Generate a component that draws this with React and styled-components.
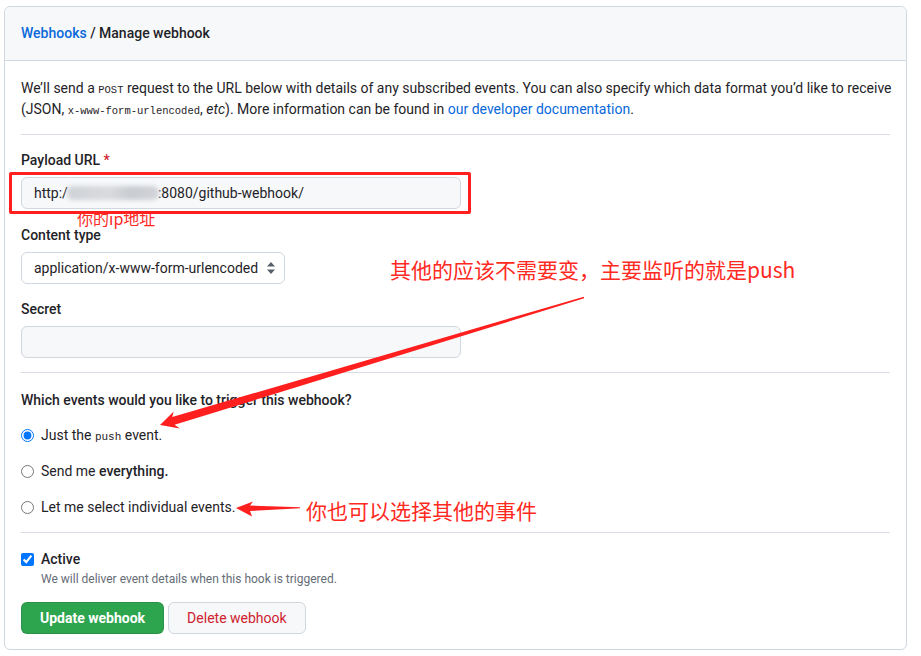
import React from "react";
import styled, { createGlobalStyle } from "styled-components";

const SANS = `Roboto, "Noto Sans", "Noto Sans CJK SC", sans-serif`;
const MONO = `"Liberation Mono", "DejaVu Sans Mono", monospace`;
const CJK = `"Noto Sans CJK SC", "Noto Sans", sans-serif`;

const Global = createGlobalStyle`
  html, body { margin: 0; padding: 0; background: #ffffff; }
  body { font-family: ${SANS}; color: #1f2328; font-size: 14px; line-height: 21px; }
  * { box-sizing: border-box; }
`;

const Page = styled.div`
  position: relative;
  width: 921px;
  height: 656px;
  padding: 6px 14px 0 4px;
  overflow: hidden;
`;

const Box = styled.div`
  border: 1px solid #d0d7de;
  border-radius: 6px;
  background: #fff;
`;

const BoxHeader = styled.div`
  background: #f6f8fa;
  border-bottom: 1px solid #d0d7de;
  border-radius: 6px 6px 0 0;
  padding: 16px;
  font-weight: 500;
  font-size: 14px;
  line-height: 21px;
  color: #1f2328;
`;

const Crumb = styled.a`
  color: #0969da;
  text-decoration: none;
`;

const BoxBody = styled.div`
  padding: 16px 16px 15px 16px;
  display: flex;
  flex-direction: column;
`;

const Intro = styled.p`
  margin: 0;
  padding-top: 1px;
  font-size: 14px;
  line-height: 21px;
  white-space: nowrap;
`;

const Code = styled.code`
  font-family: ${MONO};
  font-size: 10.5px;
  line-height: 1;
`;

const Link = styled.a`
  color: #0969da;
  text-decoration: none;
`;

const Divider = styled.hr`
  border: 0;
  border-top: 1px solid #d8dee4;
  margin: ${(p) => p.$m || "14px 0 15px"};
  height: 0;
`;

const Group = styled.div`
  display: flex;
  flex-direction: column;
  align-items: flex-start;
  margin-bottom: ${(p) => p.$mb ?? 16}px;
`;

const Label = styled.label`
  font-weight: 500;
  font-size: 14px;
  line-height: 21px;
  margin-bottom: 6px;
`;

const Req = styled.span`
  color: #cf222e;
`;

const TextInput = styled.div`
  width: 440px;
  height: 32px;
  padding: 0 12px;
  display: flex;
  align-items: center;
  background: #f6f8fa;
  border: 1px solid #d0d7de;
  border-radius: 6px;
  font-size: 14px;
  color: #1f2328;
  white-space: nowrap;
`;

const Blur = styled.span`
  display: inline-block;
  width: 92px;
  height: 14px;
  border-radius: 6px;
  background: linear-gradient(90deg, #cfd2d6 0%, #d9dbde 45%, #c9ccd0 70%, #d2d4d8 100%);
  filter: blur(2px);
  margin: 0 -1px;
`;

const Select = styled.div`
  width: 264px;
  height: 32px;
  padding: 0 8px 0 12px;
  display: flex;
  align-items: center;
  justify-content: space-between;
  background: #fff;
  border: 1px solid #d0d7de;
  border-radius: 6px;
  font-size: 14px;
  white-space: nowrap;
`;

const Question = styled.div`
  font-weight: 500;
  font-size: 14px;
  line-height: 21px;
  margin-bottom: 14px;
`;

const RadioList = styled.div`
  display: flex;
  flex-direction: column;
  gap: 15px;
`;

const Choice = styled.label`
  display: flex;
  align-items: center;
  gap: 7px;
  height: 21px;
  font-size: 14px;
  line-height: 21px;
  input {
    margin: 0;
    width: 13px;
    height: 13px;
  }
`;

const Strong = styled.span`
  font-weight: 500;
`;

const SmallCode = styled.code`
  font-family: ${MONO};
  font-size: 11px;
  line-height: 1;
`;

const CheckRow = styled.label`
  display: flex;
  align-items: center;
  gap: 7px;
  font-weight: 500;
  font-size: 14px;
  line-height: 21px;
  input {
    margin: 0;
    width: 13px;
    height: 13px;
  }
`;

const Note = styled.div`
  font-size: 12px;
  line-height: 18px;
  color: #656d76;
  padding-left: 20px;
`;

const Actions = styled.div`
  display: flex;
  gap: 4px;
  margin-top: 14px;
`;

const Button = styled.button`
  height: 32px;
  padding: 0 18px;
  border-radius: 6px;
  font-family: ${SANS};
  font-size: 14px;
  line-height: 20px;
  cursor: pointer;
  border: 1px solid ${(p) => (p.$primary ? "rgba(31,35,40,0.15)" : "#d0d7de")};
  background: ${(p) => (p.$primary ? "#2da44e" : "#f6f8fa")};
  color: ${(p) => (p.$primary ? "#ffffff" : "#cf222e")};
  font-weight: ${(p) => (p.$primary ? 700 : 400)};
`;

const Overlay = styled.svg`
  position: absolute;
  left: 0;
  top: 0;
  pointer-events: none;
`;

const Highlight = styled.div`
  position: absolute;
  left: 9px;
  top: 172px;
  width: 462px;
  height: 42px;
  border: 3px solid #ff1f1f;
  border-radius: 2px;
`;

const Note1 = styled.div`
  position: absolute;
  left: ${(p) => p.$x}px;
  top: ${(p) => p.$y}px;
  font-family: ${CJK};
  font-size: ${(p) => p.$size}px;
  line-height: 1;
  color: #ff2a1f;
  white-space: nowrap;
`;

function Caret() {
  return (
    <svg width="10" height="16" viewBox="0 0 10 16">
      <path d="M5 2 L9 6.5 L1 6.5 Z" fill="#57606a" />
      <path d="M5 14 L9 9.5 L1 9.5 Z" fill="#57606a" />
    </svg>
  );
}

export default function App() {
  return (
    <>
      <Global />
      <Page>
        <Box>
          <BoxHeader>
            <Crumb href="#">Webhooks</Crumb> / Manage webhook
          </BoxHeader>
          <BoxBody>
            <Intro>
              We’ll send a <Code>POST</Code> request to the URL below with details of any subscribed events. You can also specify which data format you’d like to receive
              <br />
              (JSON, <Code>x-www-form-urlencoded</Code>, <em>etc</em>). More information can be found in{" "}
              <Link href="#">our developer documentation</Link>.
            </Intro>
            <Divider />
            <Group>
              <Label>
                Payload URL <Req>*</Req>
              </Label>
              <TextInput>
                http:/<Blur />:8080/github-webhook/
              </TextInput>
            </Group>
            <Group $mb={15}>
              <Label>Content type</Label>
              <Select>
                application/x-www-form-urlencoded
                <Caret />
              </Select>
            </Group>
            <Group $mb={0}>
              <Label>Secret</Label>
              <TextInput />
            </Group>
            <Divider $m="14px 0 17px" />
            <Question>Which events would you like to trigger this webhook?</Question>
            <RadioList>
              <Choice>
                <input type="radio" name="ev" defaultChecked />
                <span>
                  Just the <SmallCode>push</SmallCode> event.
                </span>
              </Choice>
              <Choice>
                <input type="radio" name="ev" />
                <span>
                  Send me <Strong>everything.</Strong>
                </span>
              </Choice>
              <Choice>
                <input type="radio" name="ev" />
                <span>Let me select individual events.</span>
              </Choice>
            </RadioList>
            <Divider $m="14px 0 16px" />
            <CheckRow>
              <input type="checkbox" defaultChecked />
              Active
            </CheckRow>
            <Note>We will deliver event details when this hook is triggered.</Note>
            <Actions>
              <Button $primary>Update webhook</Button>
              <Button>Delete webhook</Button>
            </Actions>
          </BoxBody>
        </Box>

        <Highlight />
        <Note1 $x={77} $y={210} $size={16}>你的ip地址</Note1>
        <Note1 $x={390} $y={259} $size={21}>其他的应该不需要变，主要监听的就是push</Note1>
        <Note1 $x={306} $y={500} $size={21}>你也可以选择其他的事件</Note1>
        <Overlay width="921" height="656" viewBox="0 0 921 656">
          <polygon
            fill="#ff1f1f"
            points="160,425 179.8,428.4 174.6,424.8 584.2,298.3 583.8,296.7 172.2,417.1 173.7,411.5"
          />
          <polygon
            fill="#ff1f1f"
            points="236,508 253,501.5 250,505.5 300,507.3 300,508.3 250,511 252,516.5"
          />
        </Overlay>
      </Page>
    </>
  );
}
